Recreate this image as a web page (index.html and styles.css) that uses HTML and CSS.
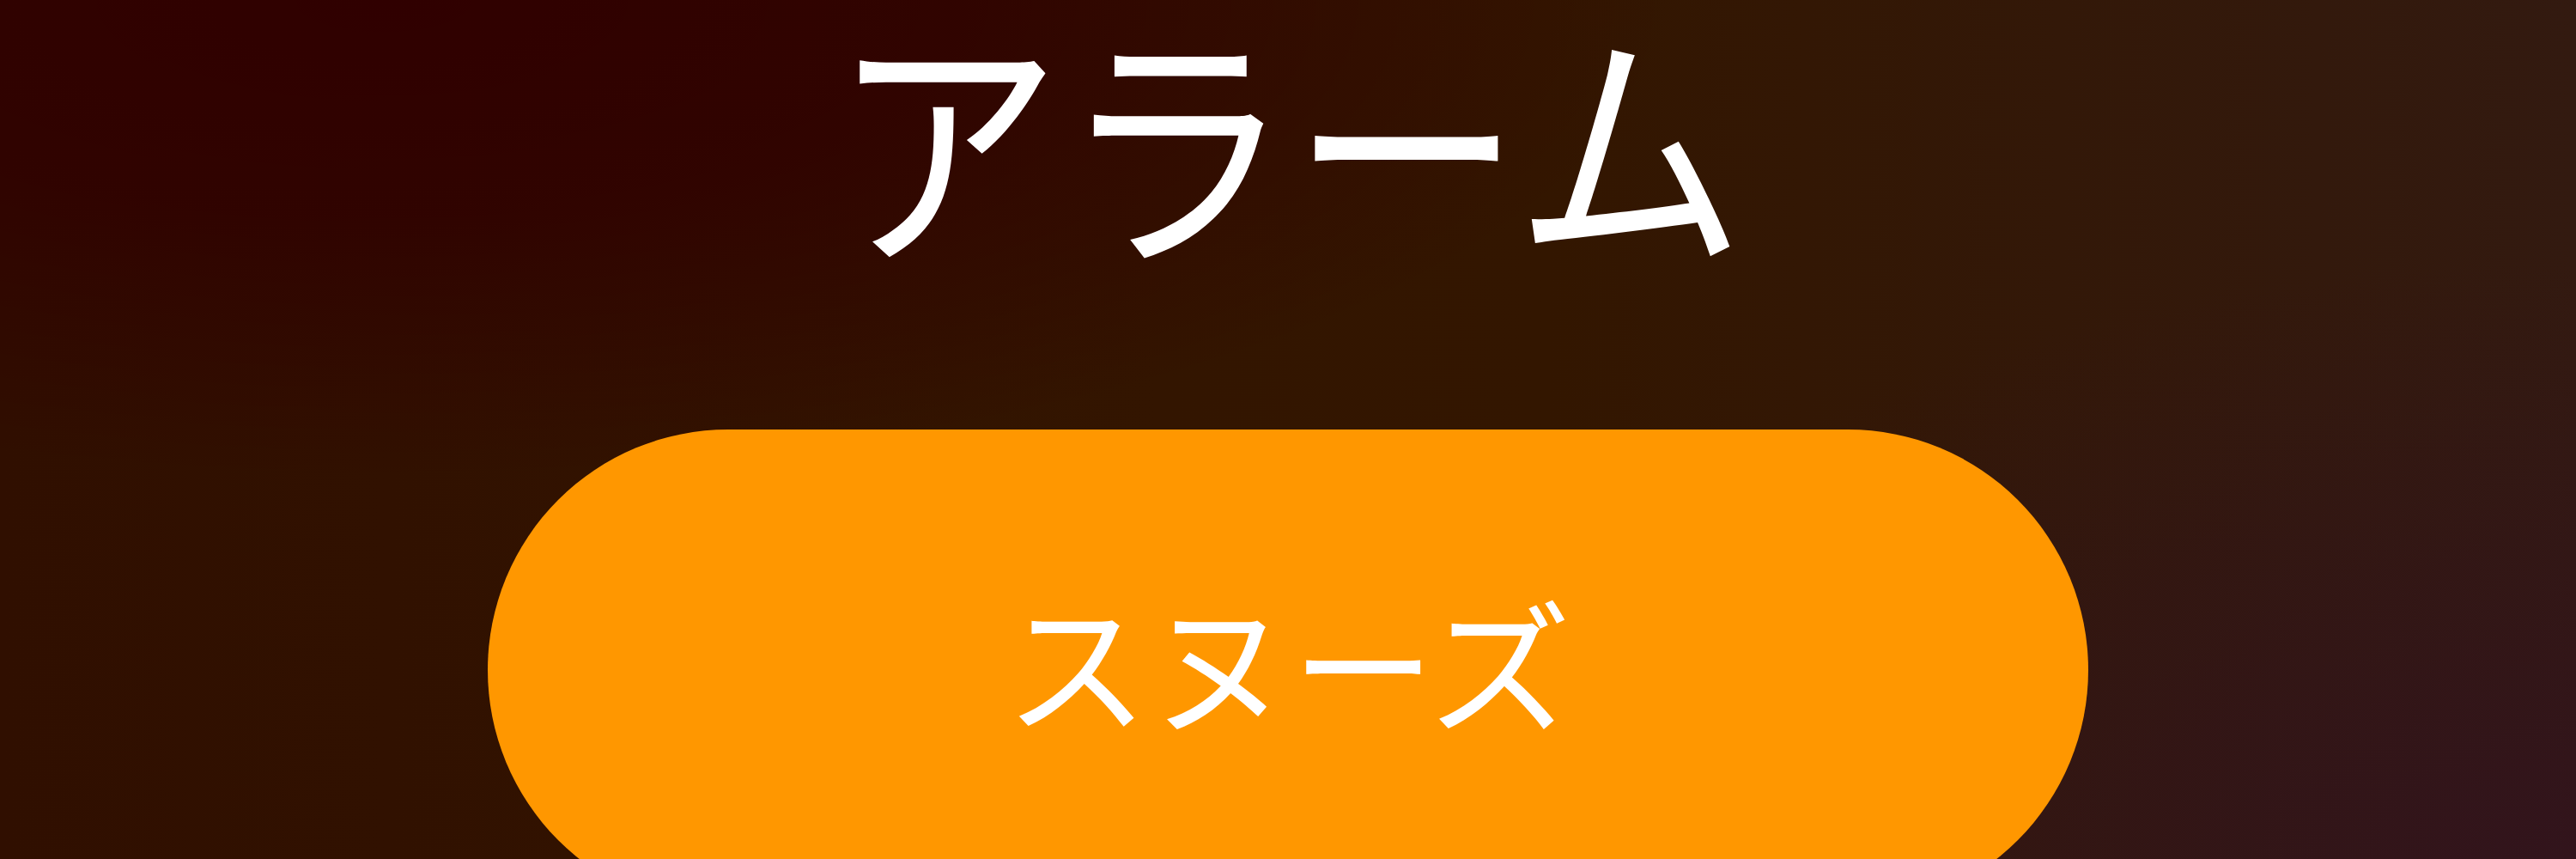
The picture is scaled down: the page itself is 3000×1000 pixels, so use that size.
FILE: index.html
```html
<!DOCTYPE html>
<html lang="ja">
<head>
<meta charset="utf-8">
<title>アラーム</title>
<link rel="stylesheet" href="styles.css">
</head>
<body>
<main class="screen">
  <h1 class="title">アラーム</h1>
  <button class="snooze" type="button">スヌーズ</button>
</main>
</body>
</html>
```
FILE: styles.css
```css
html, body {
  margin: 0;
  padding: 0;
  width: 100%;
  height: 100%;
  overflow: hidden;
}

body {
  font-family: "Noto Sans CJK JP", "Noto Sans", sans-serif;
  background-color: #321400;
  background-image:
    radial-gradient(ellipse 1500px 560px at 450px 0px, rgba(48, 0, 0, 1) 0%, rgba(48, 0, 0, 0.8) 45%, rgba(48, 0, 0, 0) 100%),
    radial-gradient(ellipse 1300px 700px at 3000px 1000px, rgba(50, 20, 28, 1) 0%, rgba(50, 20, 28, 0) 100%),
    linear-gradient(90deg, #300f00 0%, #331500 45%, #331600 60%, #331a10 100%);
}

.screen {
  display: flex;
  flex-direction: column;
  align-items: center;
  padding-top: 5px;
  height: 1000px;
  box-sizing: border-box;
}

.title {
  margin: 0;
  padding: 0 20px;
  font-size: 268px;
  line-height: 295px;
  font-weight: 400;
  color: #ffffff;
  white-space: nowrap;
  transform: scaleY(1.12);
  transform-origin: 50% 105px;
}

.snooze {
  margin-top: 200px;
  width: 1864px;
  height: 560px;
  flex: none;
  border: none;
  border-radius: 280px;
  background: #ff9700;
  color: #ffffff;
  font-family: "Noto Sans CJK JP", "Noto Sans", sans-serif;
  font-size: 167px;
  line-height: 200px;
  font-weight: 400;
  white-space: nowrap;
  display: flex;
  align-items: center;
  justify-content: center;
  padding: 0 0 24px 0;
  box-sizing: border-box;
}
```
